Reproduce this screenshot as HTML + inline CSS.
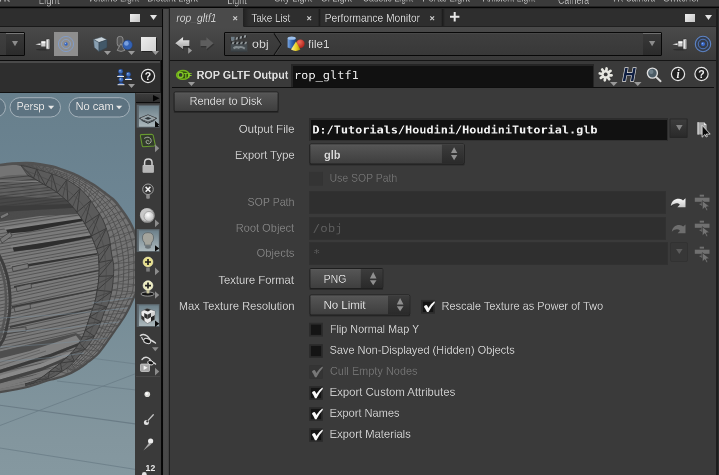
<!DOCTYPE html>
<html><head><meta charset="utf-8"><title>Houdini - rop_gltf1</title>
<style>
html,body{margin:0;padding:0;background:#3a3a3a;}
body{width:719px;height:475px;position:relative;overflow:hidden;font-family:"Liberation Sans",sans-serif;}
.a{position:absolute;}
.t{position:absolute;white-space:pre;line-height:1.6;transform-origin:0 0;will-change:transform;}
svg{position:absolute;overflow:visible;}
.field{position:absolute;box-sizing:border-box;background:#111;border-style:solid;border-color:#2c2c2c #2c2c2c #313131 #2c2c2c;border-width:2px 1px 1px 2px;}
.fieldd{position:absolute;box-sizing:border-box;background:#2f2f2f;border:1px solid #313131;}
</style></head><body>
<!-- ===== top shelf strip ===== -->
<div class="a" id="shelf" style="left:0;top:0;width:719px;height:7px;background:linear-gradient(#3a3a3a 0,#3a3a3a 6px,#232323 6px);overflow:hidden;">
<span class="t" style="left:-19px;top:-12px;color:#b4b4b4;font-family:'Liberation Sans',sans-serif;font-size:24px;transform:translate(0.4px,0.8px) scale(0.5513,0.4706);">Light</span>
<span class="t" style="left:38px;top:-9px;color:#b4b4b4;font-family:'Liberation Sans',sans-serif;font-size:24px;transform:translate(0.7px,0.4px) scale(0.4009,0.4706);">Light</span>
<span class="t" style="left:87px;top:-12px;color:#b4b4b4;font-family:'Liberation Sans',sans-serif;font-size:24px;transform:translate(0.74px,0.8px) scale(0.3715,0.4706);">Volume Light</span>
<span class="t" style="left:147px;top:-12px;color:#b4b4b4;font-family:'Liberation Sans',sans-serif;font-size:24px;transform:translate(0.24px,0.8px) scale(0.3811,0.4706);">Distant Light</span>
<span class="t" style="left:227px;top:-9px;color:#b4b4b4;font-family:'Liberation Sans',sans-serif;font-size:24px;transform:translate(0.26px,0.4px) scale(0.3709,0.4706);">Light</span>
<span class="t" style="left:274px;top:-12px;color:#b4b4b4;font-family:'Liberation Sans',sans-serif;font-size:24px;transform:translate(0.2px,0.8px) scale(0.3858,0.4706);">Sky Light</span>
<span class="t" style="left:320px;top:-12px;color:#b4b4b4;font-family:'Liberation Sans',sans-serif;font-size:24px;transform:translate(0.53px,0.8px) scale(0.3751,0.4706);">GI Light</span>
<span class="t" style="left:362px;top:-12px;color:#b4b4b4;font-family:'Liberation Sans',sans-serif;font-size:24px;transform:translate(0.54px,0.8px) scale(0.3657,0.4706);">Caustic Light</span>
<span class="t" style="left:422px;top:-12px;color:#b4b4b4;font-family:'Liberation Sans',sans-serif;font-size:24px;transform:translate(0.21px,0.8px) scale(0.3943,0.4706);">Portal Light</span>
<span class="t" style="left:482px;top:-12px;color:#b4b4b4;font-family:'Liberation Sans',sans-serif;font-size:24px;transform:translate(0.92px,0.8px) scale(0.3568,0.4706);">Ambient Light</span>
<span class="t" style="left:558px;top:-9px;color:#b4b4b4;font-family:'Liberation Sans',sans-serif;font-size:24px;transform:translate(0.04px,0.2px) scale(0.3629,0.4706);">Camera</span>
<span class="t" style="left:611px;top:-12px;color:#b4b4b4;font-family:'Liberation Sans',sans-serif;font-size:24px;transform:translate(0.76px,0.8px) scale(0.3451,0.4706);">VR Camera</span>
<span class="t" style="left:663px;top:-12px;color:#b4b4b4;font-family:'Liberation Sans',sans-serif;font-size:24px;transform:translate(0.19px,0.8px) scale(0.3944,0.4706);">Switcher</span>
</div>
<div class="a" style="left:0;top:7px;width:719px;height:1px;background:#050505;"></div>
<div class="a" style="left:0;top:8px;width:719px;height:1px;background:#262626;"></div>

<!-- ===== left pane ===== -->
<div class="a" id="leftpane" style="left:0;top:9px;width:163px;height:466px;background:#2e2e2e;overflow:hidden;">
  <div class="a" style="left:0;top:17px;width:162px;height:1px;background:#1a1a1a;"></div>
  <!-- toolbar 27-60 -->
  <div class="a" style="left:0;top:18px;width:162px;height:33px;background:linear-gradient(#494949,#3a3a3a);"></div>
  <div class="a" style="left:0;top:51px;width:160px;height:1px;background:#0c0c0c;"></div>
  <div class="a" style="left:0;top:52px;width:160px;height:2px;background:#4a4a4a;"></div>
  <div class="a" style="left:0;top:83px;width:160px;height:1px;background:#111;"></div>
  <div class="a" style="left:160px;top:51px;width:3px;height:415px;background:linear-gradient(90deg,#2a2a2a,#080808 45%,#050505);"></div>
  <div class="a" style="left:161.5px;top:0;width:1.5px;height:51px;background:#080808;"></div>
</div>
<!-- pane header controls -->
<div class="a" style="left:130px;top:14px;width:10px;height:8px;background:linear-gradient(135deg,#f0f0f0,#c4c4c4);"></div>
<svg style="left:149.5px;top:15px" width="7" height="5" viewBox="0 0 7 5"><path d="M0 0H7L3.5 5Z" fill="#e4e4e4"/></svg>

<!-- toolbar: dropdown stub -->
<div class="a" style="left:-3px;top:32px;width:28px;height:24px;box-sizing:border-box;border:1px solid #080808;border-radius:1px;background:linear-gradient(#3f3f3f,#383838);overflow:hidden;">
  <div class="a" style="left:0;top:0;width:26px;height:1px;background:#484848;"></div>
  <div class="a" style="left:8px;top:0;width:18px;height:22px;background:linear-gradient(#393939,#2b2b2b);"></div>
  <div class="a" style="left:8px;top:0;width:18px;height:1px;background:#787878;"></div>
</div>
<svg style="left:12.4px;top:41.1px" width="6" height="5.2" viewBox="0 0 6 5.2"><path d="M0 0H6L3 5.2Z" fill="#8c8c8c"/></svg>

<!-- pin icon -->
<svg id="pinL" style="left:33px;top:36px" width="19" height="16" viewBox="0 0 19 16">
  <ellipse cx="10" cy="13.6" rx="7" ry="1" fill="#1c1c1c" opacity=".5"/>
  <path d="M2.3 8.3L8 7.3V9.3Z" fill="#f0f0f0"/>
  <rect x="7.9" y="4.9" width="5.2" height="6" fill="#cfcfcf" stroke="#303030" stroke-width=".6"/>
  <rect x="8.5" y="5.5" width="4.2" height="1.7" fill="#fafafa"/>
  <rect x="13" y="3" width="3.7" height="10.2" rx=".8" fill="#e6e6e6" stroke="#303030" stroke-width=".6"/>
  <rect x="15" y="3.5" width="1.2" height="9.2" fill="#b0b0b0"/>
</svg>

<!-- selected "link" button -->
<div class="a" style="left:54px;top:32px;width:24px;height:24px;background:#8e8e8e;"></div>
<svg style="left:54px;top:32px" width="24" height="24" viewBox="0 0 24 24">
  <circle cx="12" cy="12" r="7.6" fill="none" stroke="#7d9fd6" stroke-width=".9" opacity=".85"/>
  <circle cx="12" cy="12" r="4.6" fill="none" stroke="#86a6da" stroke-width=".8" opacity=".8"/>
  <circle cx="12" cy="12" r="1.7" fill="#2f62c4"/>
  <circle cx="11.5" cy="11.5" r=".7" fill="#8fb2ee"/>
</svg>

<!-- cube icon -->
<svg style="left:92px;top:36px" width="20" height="20" viewBox="0 0 20 20">
  <path d="M1.5 3.5L9.5 1L15 3.8L7 6.6Z" fill="#c9d3da" stroke="#42525e" stroke-width=".5"/>
  <path d="M1.5 3.5L7 6.6V15.5L2.3 11.6Z" fill="#8aa0b2" stroke="#42525e" stroke-width=".5"/>
  <path d="M7 6.6L15 3.8V11.6L7 15.5Z" fill="#425868" stroke="#34434e" stroke-width=".5"/>
  <path d="M12 15H19L15.5 19Z" fill="#9a9a9a"/>
</svg>

<!-- shading icon -->
<svg style="left:115px;top:35px" width="22" height="21" viewBox="0 0 22 21">
  <rect x="2.2" y="1.4" width="5.8" height="10" rx="2.6" fill="#565656" stroke="#8c8c8c" stroke-width="1"/>
  <path d="M6 8.5L2.2 15.4Q6 17.4 9.8 15.4Z" fill="#505050" stroke="#8c8c8c" stroke-width="1"/>
  <circle cx="12.6" cy="9.9" r="4.8" fill="#3462b4"/>
  <circle cx="11.4" cy="8.4" r="2.3" fill="#8fb4ee" opacity=".75"/>
  <circle cx="12.6" cy="9.9" r="4.8" fill="none" stroke="#1f3f7c" stroke-width=".5"/>
  <path d="M13 16H20L16.5 20Z" fill="#9a9a9a"/>
</svg>

<!-- white square -->
<div class="a" style="left:140.5px;top:36.5px;width:15px;height:14.5px;background:linear-gradient(135deg,#ededed,#d2d2d2);box-shadow:1px 1px 0 #222;"></div>
<svg style="left:152px;top:51px" width="7" height="4" viewBox="0 0 7 4"><path d="M0 0H7L3.5 4Z" fill="#9a9a9a"/></svg>

<!-- people icon -->
<svg style="left:116px;top:68px" width="22" height="22" viewBox="0 0 22 22">
  <g fill="#3d6cc0" stroke="#1c3a78" stroke-width=".4">
  <circle cx="4.6" cy="3.4" r="2.3"/><path d="M1.2 8.2Q4.6 4.2 8 8.2Z"/>
  <circle cx="12.4" cy="6.4" r="2.3"/><path d="M9 11.2Q12.4 7.2 15.8 11.2Z"/>
  <circle cx="5" cy="11.6" r="2.3"/><path d="M1.6 16.4Q5 12.4 8.4 16.4Z"/>
  </g>
  <g fill="#e8e8e8"><rect x="1.2" y="8" width="6.8" height="1"/><rect x="9" y="11" width="6.8" height="1"/><rect x="1.6" y="16.2" width="6.8" height="1"/></g>
  <circle cx="4" cy="2.8" r=".8" fill="#9dbcf0"/><circle cx="11.8" cy="5.8" r=".8" fill="#9dbcf0"/><circle cx="4.4" cy="11" r=".8" fill="#9dbcf0"/>
  <path d="M12 16H19L15.5 20Z" fill="#9a9a9a"/>
</svg>

<!-- help icon -->
<svg style="left:140px;top:68px;will-change:transform" width="16" height="16" viewBox="0 0 16 16">
  <circle cx="8" cy="8" r="6.6" fill="#202020" stroke="#e6e6e6" stroke-width="1.2"/>
  <text x="8" y="11.9" font-family="Liberation Sans, sans-serif" font-weight="bold" font-size="10.5" fill="#f2f2f2" text-anchor="middle">?</text>
</svg>
<!-- ===== 3D viewport ===== -->
<svg id="viewport" style="left:0;top:92px" width="136" height="383" viewBox="0 92 136 383">
  <defs>
    <linearGradient id="sky" x1="0" y1="0" x2="0" y2="1">
      <stop offset="0" stop-color="#677f8c"/><stop offset=".338" stop-color="#6e8694"/><stop offset=".427" stop-color="#728996"/><stop offset=".602" stop-color="#788e98"/><stop offset=".908" stop-color="#83969e"/><stop offset="1" stop-color="#8598a0"/>
    </linearGradient>
    <clipPath id="vpclip"><rect x="0" y="93" width="135" height="382"/></clipPath>
    <clipPath id="silclip"><path d="M-2 165.3C0.3 165 7.1 164 12 163.6C16.9 163.2 22.7 162.9 27.4 163C32.1 163.1 35.8 163.6 40 164.2C44.2 164.8 48.8 165.6 52.6 166.6C56.4 167.6 59.5 168.8 63 170C66.5 171.2 70.2 172.4 73.7 174C77.2 175.6 80.5 177.4 84 179.3C87.5 181.2 91.4 183.3 94.7 185.5C98 187.7 100.8 190 104 192.4C107.2 194.8 111 197.5 113.7 200C116.4 202.5 118 204.9 120 207.6C122 210.3 124.2 213.2 126 216C127.8 218.8 129.6 221.7 131 224.5C132.4 227.3 133.5 229.9 134.7 233C135.9 236.1 137.4 241.3 138 243L138 290L138 290C137.3 291.2 135.3 294.3 134 297C132.7 299.7 131.5 302.9 130 306C128.5 309.1 127 312.2 125 315.5C123 318.8 120.3 322.6 118 326C115.7 329.4 113.3 332.7 111 336C108.7 339.3 106.3 342.9 104 346C101.7 349.1 99.7 352.1 97 354.8C94.3 357.5 91 359.7 88 362C85 364.3 82.5 366.4 78.7 368.7C74.9 371 69 374 65 375.6C61 377.2 58.2 377.7 55 378.6C51.8 379.5 49.5 379.9 46 381C42.5 382.1 37.8 383.8 34 385C30.2 386.2 27 387.1 23 388C19 388.9 14.2 389.8 10 390.5C5.8 391.2 0 392.2 -2 392.5Z"/></clipPath>
    <clipPath id="inclip"><path d="M-2 177.5L-2 177.5C0 177.1 5.1 175.6 10 175.2C14.9 174.8 23.1 174.3 27.4 175C31.7 175.7 33.2 178 36 179.6C38.8 181.2 41.3 182.9 44 184.5C46.7 186.1 49.5 187.4 52 189C54.5 190.6 56.7 192.2 59 194C61.3 195.8 63.5 197.7 65.6 199.6C67.7 201.5 69.5 203.2 71.6 205.5C73.7 207.8 75.9 210.8 78 213.6C80.1 216.4 82.2 219.6 84 222.4C85.8 225.2 87.2 227.8 88.6 230.6C90 233.4 91 235.1 92.6 239C94.2 242.9 97 250 98 254C99 258 98.6 260.2 98.8 263C99 265.8 99.1 267.8 99 271C98.9 274.2 98.8 278.5 98.4 282C98 285.5 97.4 288.5 96.8 292C96.2 295.5 95.6 299.5 94.6 303C93.6 306.5 92.4 308.8 91 313C89.6 317.2 87.5 323.8 86 328C84.5 332.2 83.6 334.8 82 338C80.4 341.2 78.1 344.6 76.4 347C74.7 349.4 73.6 350.8 72 352.5C70.4 354.2 69 355.2 67 357C65 358.8 62.3 361.6 60 363.5C57.7 365.4 55.5 366.8 53 368.7C50.5 370.6 47.7 373.1 45 375C42.3 376.9 40.3 378.5 37 380C33.7 381.5 27 383.3 25 384L-2 389Z"/></clipPath>
  </defs>
  <g clip-path="url(#vpclip)">
  <rect x="0" y="93" width="135" height="382" fill="url(#sky)"/>
  <g stroke="#7c95a8" stroke-width=".6" opacity=".8">
    <path d="M108 236.5H136M110 239.5H136M112 242.5H136M113 245.5H136M114 248.5H136M114 251.5H136M115 255H136"/>
  </g>
  <g stroke="#6a7c86" fill="none">
    <path d="M0 405.3L136 424" stroke-width="1.1"/>
    <path d="M0 448L136 469.5" stroke-width=".8"/>
    <path d="M57 381L136 390" stroke-width=".8"/>
    <path d="M94 358.5L136 364" stroke-width=".7"/>
    <path d="M0 425.5L136 373.5" stroke-width=".8"/>
  </g>
  <!-- model -->
  <path d="M-2 165.3C0.3 165 7.1 164 12 163.6C16.9 163.2 22.7 162.9 27.4 163C32.1 163.1 35.8 163.6 40 164.2C44.2 164.8 48.8 165.6 52.6 166.6C56.4 167.6 59.5 168.8 63 170C66.5 171.2 70.2 172.4 73.7 174C77.2 175.6 80.5 177.4 84 179.3C87.5 181.2 91.4 183.3 94.7 185.5C98 187.7 100.8 190 104 192.4C107.2 194.8 111 197.5 113.7 200C116.4 202.5 118 204.9 120 207.6C122 210.3 124.2 213.2 126 216C127.8 218.8 129.6 221.7 131 224.5C132.4 227.3 133.5 229.9 134.7 233C135.9 236.1 137.4 241.3 138 243L138 290L138 290C137.3 291.2 135.3 294.3 134 297C132.7 299.7 131.5 302.9 130 306C128.5 309.1 127 312.2 125 315.5C123 318.8 120.3 322.6 118 326C115.7 329.4 113.3 332.7 111 336C108.7 339.3 106.3 342.9 104 346C101.7 349.1 99.7 352.1 97 354.8C94.3 357.5 91 359.7 88 362C85 364.3 82.5 366.4 78.7 368.7C74.9 371 69 374 65 375.6C61 377.2 58.2 377.7 55 378.6C51.8 379.5 49.5 379.9 46 381C42.5 382.1 37.8 383.8 34 385C30.2 386.2 27 387.1 23 388C19 388.9 14.2 389.8 10 390.5C5.8 391.2 0 392.2 -2 392.5Z" fill="#747474"/>
  <g clip-path="url(#silclip)">
    <path d="M12 163.6L24.2 166.1L19.8 163.2L30.7 167.5L27.6 163L37 169.3L35.4 163.6L43.3 171.2L43.1 164.7L49.7 173.1L50.7 166.2L55.9 175.2L58.2 168.3L62.1 177.6L65.6 170.9L67.9 180.6L72.9 173.6L73.6 184L79.9 177.1L78.9 187.8L86.7 180.8L83.8 192.3L93.5 184.7L88.1 197.2L99.9 189.2L92 202.5L106.1 193.9L95.7 208L112.2 198.7L99.3 213.5L117.6 204.4L102.6 219.2L122.3 210.6L105.2 225.3L126.7 217L107.3 231.5L130.6 223.8L109.2 237.8L133.9 230.8L110.3 244.3L136.9 238L111.2 250.9L138.3 245.7L112.2 257.4L138.8 253.5L113.5 263.8L139 261.3L113.7 270.4L139 269.1L113.4 277L138.9 276.9L112.8 283.6L138.5 284.6L112 290.1L137.4 292.4L110.5 296.6L133.2 298.8L108.6 302.9L130 305.9L105.9 308.9L126.5 312.9L103.3 314.9L122.4 319.5L101.2 321.1L118 325.9L98.9 327.3L113.6 332.3L95.9 333.2L109.1 338.7L92.6 338.9L104.6 345.1L88.9 344.3L100 351.4L84.8 349.5L94.6 357L80.3 354.3L88.4 361.7L76 359.4L82.2 366.4L71.7 364.3L75.5 370.4L66.6 368.5L68.5 373.9L61 372" stroke="#505050" stroke-width=".8" fill="none" stroke-linejoin="round"/>
    <path d="M13.8 164C15.7 164 21.3 163.8 25.1 163.9C28.8 164.1 32.6 164.4 36.3 164.9C40.1 165.4 43.8 166.1 47.5 166.9C51.1 167.7 54.8 168.7 58.4 169.9C62 171.1 65.5 172.4 69 173.9C72.5 175.4 75.9 177 79.2 178.8C82.5 180.6 85.7 182.5 88.9 184.6C92 186.7 95 189 97.9 191.3C100.8 193.7 103.8 196 106.5 198.6C109.2 201.2 111.9 203.9 114.3 206.8C116.6 209.7 118.7 212.9 120.6 216.1C122.6 219.3 124.6 222.5 126.2 225.9C127.8 229.3 129.2 232.9 130.3 236.4C131.4 240 132.4 243.7 133 247.4C133.5 251.1 133.7 254.9 133.8 258.7C134 262.4 134 266.2 133.9 270C133.9 273.8 133.8 277.6 133.6 281.3C133.3 285.1 133.3 289 132.2 292.6C131.1 296.1 128.7 299.1 127 302.4C125.4 305.8 123.9 309.3 122.1 312.6C120.3 316 118.4 319.2 116.4 322.4C114.5 325.6 112.4 328.8 110.4 331.9C108.3 335.1 106.2 338.2 104 341.3C101.9 344.4 99.8 347.7 97.4 350.5C94.9 353.3 92.1 355.9 89.3 358.4C86.5 360.9 83.6 363.3 80.5 365.5C77.5 367.7 72.5 370.5 70.9 371.5M15.6 164.4C17.4 164.4 22.9 164.5 26.5 164.8C30.1 165.1 33.7 165.6 37.3 166.2C40.9 166.9 44.5 167.6 48 168.5C51.6 169.3 55.1 170.3 58.5 171.5C62 172.7 65.4 174 68.7 175.5C72 177.1 75.3 178.7 78.4 180.6C81.6 182.4 84.7 184.4 87.6 186.5C90.5 188.7 93.3 191.1 96 193.5C98.7 195.9 101.3 198.3 103.8 201C106.3 203.6 108.8 206.3 110.9 209.2C113.1 212.1 115 215.2 116.8 218.4C118.6 221.5 120.3 224.8 121.7 228.1C123.1 231.4 124.3 234.9 125.3 238.4C126.3 241.9 127.1 245.5 127.6 249.1C128.2 252.7 128.5 256.3 128.7 260C128.9 263.6 128.9 267.3 128.8 270.9C128.8 274.6 128.7 278.2 128.4 281.9C128.1 285.5 128 289.3 127 292.7C126 296.2 124 299.3 122.4 302.6C120.9 305.8 119.3 309.2 117.7 312.4C116.1 315.7 114.4 318.9 112.6 322.1C110.9 325.3 109 328.4 107.1 331.5C105.2 334.6 103.3 337.7 101.2 340.7C99.1 343.8 97.1 346.8 94.7 349.6C92.4 352.4 89.7 354.9 87 357.4C84.4 359.9 81.7 362.4 78.8 364.6C76 366.8 71.3 369.7 69.8 370.7M17.4 164.7C19.1 164.9 24.4 165.3 27.9 165.7C31.4 166.2 34.8 166.9 38.3 167.6C41.7 168.3 45.2 169.1 48.6 170C52 170.9 55.4 171.9 58.7 173.1C62 174.3 65.3 175.7 68.5 177.2C71.6 178.8 74.8 180.5 77.7 182.3C80.7 184.2 83.6 186.2 86.3 188.4C89 190.7 91.5 193.1 94 195.6C96.5 198.1 98.8 200.6 101.1 203.3C103.4 206 105.7 208.7 107.6 211.6C109.6 214.5 111.3 217.6 112.9 220.7C114.5 223.8 116 227 117.3 230.3C118.5 233.6 119.5 237 120.3 240.4C121.2 243.8 121.7 247.3 122.3 250.8C122.8 254.2 123.4 257.7 123.7 261.3C123.9 264.8 123.8 268.3 123.7 271.9C123.7 275.4 123.5 278.9 123.2 282.5C122.9 286 122.7 289.6 121.8 292.9C120.9 296.3 119.3 299.4 117.8 302.7C116.4 305.9 114.8 309.1 113.3 312.2C111.8 315.4 110.4 318.6 108.8 321.8C107.2 324.9 105.7 328.1 103.9 331.1C102.2 334.2 100.3 337.2 98.3 340.1C96.4 343.1 94.4 346 92.1 348.7C89.8 351.4 87.3 353.9 84.8 356.3C82.3 358.8 79.8 361.4 77.2 363.7C74.5 365.9 70.1 368.9 68.7 370M19.2 165.1C20.9 165.4 25.9 166 29.3 166.6C32.6 167.3 35.9 168.1 39.2 168.9C42.5 169.7 45.8 170.6 49.1 171.6C52.4 172.5 55.7 173.5 58.8 174.7C62 175.9 65.2 177.3 68.2 178.9C71.2 180.4 74.2 182.2 77 184.1C79.8 186 82.5 188.1 85.1 190.4C87.6 192.6 89.8 195.2 92.1 197.7C94.3 200.3 96.4 202.9 98.4 205.6C100.5 208.3 102.6 211.1 104.3 213.9C106.1 216.8 107.6 219.9 109 223C110.5 226.1 111.8 229.2 112.8 232.5C113.9 235.7 114.6 239 115.3 242.4C116 245.7 116.4 249.1 117 252.4C117.5 255.8 118.3 259.2 118.6 262.6C118.9 265.9 118.8 269.4 118.7 272.8C118.6 276.2 118.4 279.6 118 283C117.7 286.4 117.3 289.9 116.5 293.1C115.7 296.4 114.5 299.6 113.2 302.8C112 305.9 110.3 308.9 108.9 312C107.5 315.2 106.4 318.4 105 321.5C103.6 324.6 102.3 327.7 100.7 330.7C99.1 333.7 97.4 336.7 95.5 339.5C93.6 342.4 91.6 345.2 89.5 347.8C87.3 350.5 84.9 352.9 82.5 355.3C80.2 357.8 78 360.4 75.5 362.7C73 365.1 69 368.1 67.7 369.2" stroke="#4e4e4e" stroke-width=".9" fill="none"/>
    <path d="" stroke="#484848" stroke-width=".7" fill="none"/>
    <path d="M54.1 168.6C55.8 169.2 61 170.8 64.5 172C68 173.2 71.7 174.4 75.2 176C78.7 177.6 82 179.4 85.5 181.3C89 183.2 92.9 185.3 96.2 187.5C99.5 189.7 102.3 192 105.5 194.4C108.7 196.8 112.5 199.5 115.2 202C117.9 204.5 119.5 206.9 121.5 209.6C123.5 212.3 125.7 215.2 127.5 218C129.3 220.8 131.1 223.7 132.5 226.5C133.9 229.3 135 231.9 136.2 235C137.4 238.1 139.4 240 139.5 245C139.6 250 137.6 257.5 137 265C136.4 272.5 136.2 285.8 136 290" stroke="#858585" stroke-width="1" fill="none" opacity=".7"/>
  </g>
  <path d="M-2 177.5L-2 177.5C0 177.1 5.1 175.6 10 175.2C14.9 174.8 23.1 174.3 27.4 175C31.7 175.7 33.2 178 36 179.6C38.8 181.2 41.3 182.9 44 184.5C46.7 186.1 49.5 187.4 52 189C54.5 190.6 56.7 192.2 59 194C61.3 195.8 63.5 197.7 65.6 199.6C67.7 201.5 69.5 203.2 71.6 205.5C73.7 207.8 75.9 210.8 78 213.6C80.1 216.4 82.2 219.6 84 222.4C85.8 225.2 87.2 227.8 88.6 230.6C90 233.4 91 235.1 92.6 239C94.2 242.9 97 250 98 254C99 258 98.6 260.2 98.8 263C99 265.8 99.1 267.8 99 271C98.9 274.2 98.8 278.5 98.4 282C98 285.5 97.4 288.5 96.8 292C96.2 295.5 95.6 299.5 94.6 303C93.6 306.5 92.4 308.8 91 313C89.6 317.2 87.5 323.8 86 328C84.5 332.2 83.6 334.8 82 338C80.4 341.2 78.1 344.6 76.4 347C74.7 349.4 73.6 350.8 72 352.5C70.4 354.2 69 355.2 67 357C65 358.8 62.3 361.6 60 363.5C57.7 365.4 55.5 366.8 53 368.7C50.5 370.6 47.7 373.1 45 375C42.3 376.9 40.3 378.5 37 380C33.7 381.5 27 383.3 25 384L-2 389Z" fill="#7a7a7a"/>
  <g clip-path="url(#inclip)">
    <!-- shaded top underside -->
    <path d="M-2 205L40 203L73.7 203.5L80 214L40 216L-2 222Z" fill="#4c4c4c"/>
    <path d="M-2 196L70 199L73 204L-2 206Z" fill="#5a5a5a"/>
    <path d="M-2 179L112 167.7M-2 183L112 171.3M-2 186.1L112 174M-2 189.2L112 176.8M-2 193.2L112 180.3M-2 196.3L112 183M-2 199.4L112 185.8M-2 203.4L112 189.3M-2 206.5L112 192.1M-2 209.6L112 194.8M-2 213.6L112 198.4M-2 216.7L112 201.1M-2 219.8L112 203.9M-2 223.8L112 207.4M-2 226.9L112 210.2M-2 230L112 212.9M-2 234L112 216.4M-2 237.1L112 219.2M-2 240.2L112 221.9M-2 244.2L112 225.5M-2 247.3L112 228.2M-2 250.4L112 231M-2 254.4L112 234.5M-2 257.5L112 237.3M-2 260.6L112 240M-2 264.6L112 243.6M-2 267.7L112 246.3M-2 270.8L112 249M-2 274.8L112 252.6M-2 277.9L112 255.3M-2 281L112 258.1M-2 285L112 261.6M-2 288.1L112 264.4M-2 291.2L112 267.1M-2 295.2L112 270.7M-2 298.3L112 273.4M-2 301.4L112 276.3M-2 305.4L112 280.3M-2 308.5L112 283.4M-2 311.6L112 286.5M-2 315.6L112 290.5M-2 318.7L112 293.6M-2 321.8L112 296.7M-2 325.8L112 300.7M-2 328.9L112 303.8M-2 332L112 306.9M-2 336L112 310.9M-2 339.1L112 314M-2 342.2L112 317.1M-2 346.2L112 321.1M-2 349.3L112 324.2M-2 352.4L112 327.3M-2 356.4L112 331.3M-2 359.5L112 334.4M-2 362.6L112 337.5M-2 366.6L112 341.5M-2 369.7L112 344.6M-2 372.8L112 347.7M-2 376.8L112 351.7M-2 379.9L112 354.8M-2 383L112 357.9M-2 387L112 361.9M-2 390.1L112 365M-2 393.2L112 368.1M-2 397.2L112 372.1M-2 400.3L112 375.2M-2 403.4L112 378.3M-2 407.4L112 382.3M-2 410.5L112 385.4M-2 413.6L112 388.5M-2 417.6L112 392.5" stroke="#4c4c4c" stroke-width=".8" fill="none"/>
    <path d="M-2 168H90V207L-2 212Z" fill="#000" opacity=".2"/>
    <!-- light plank faces -->
    <path d="M4 228L85 215.5L86 218L6 230Z" fill="#848484"/>
    <path d="M10 246L93 233L93.7 235L12 248Z" fill="#848484"/>
    <path d="M10 265L97 251L97.5 253L12 267Z" fill="#7e7e7e"/>
    <!-- dark gaps -->
    <path d="M6 229.7L86 218L86 220.2L30 231.5L8 233.5Z" fill="#2c2c2c"/>
    <path d="M12.6 247.6L93.7 235L94 237L40 248.5L14 251.5Z" fill="#2e2e2e"/>
    <path d="M12 266.5L97.5 253L97.5 254.6L14 269Z" fill="#333"/>
    <path d="M14 286L99 270L99 271.2L14 288Z" fill="#3a3a3a"/>
    <path d="M12 306L98 289L98 290.2L12 308Z" fill="#3c3c3c"/>
    <path d="M10 326L94 308L94 309.2L10 328Z" fill="#3c3c3c"/>
    <path d="M-2 186L55 189.5M-2 192L64 196" stroke="#505050" stroke-width=".8" fill="none"/>
    <path d="M-2 181L40 181.5" stroke="#8a8a8a" stroke-width=".8" fill="none"/>
    <!-- detail boxes on left -->
    <g fill="#787878" stroke="#3a3a3a" stroke-width=".7">
      <path d="M12 267L28 263.5L28.5 268L13 271.5Z"/><path d="M16 287L31 283.5L31.5 288L17 291.5Z"/><path d="M14 307.5L30 304L30.5 308.5L15 312Z"/><path d="M0 330L26 327L26 331L0 334.5Z"/>
      <path d="M0 239L10 232L12 236L2 243Z"/><path d="M0 216L8 212L9 215L1 219Z"/>
    </g>
    <!-- far ring -->
    <path d="M-2 253C-1 255.2 2.3 261.2 4 266C5.7 270.8 7.4 276.4 8.4 281.6C9.4 286.8 9.8 291.8 10 297C10.2 302.2 10 308.2 9.5 313C9 317.8 7.9 321.8 7 326C6.1 330.2 5.5 334.3 4 338C2.5 341.7 -1 346.3 -2 348" stroke="#3e3e3e" stroke-width="3" fill="none"/>
    <path d="M-6 253C-5 255.2 -1.7 261.2 0 266C1.7 270.8 3.4 276.4 4.4 281.6C5.4 286.8 5.8 291.8 6 297C6.2 302.2 6 308.2 5.5 313C5 317.8 3.9 321.8 3 326C2.1 330.2 1.5 334.3 0 338C-1.5 341.7 -5 346.3 -6 348" stroke="#555" stroke-width="2.5" fill="none"/>
    <!-- lower planks -->
    <path d="M-2 352L30 344L76 333L84 338L60 350L30 360L-2 368Z" fill="#4e4e4e"/>
    <path d="M-2 359L30 351L76 335.5L81 342L50 354L-2 370.5Z" fill="#808080"/>
    <path d="M-2 370.5L50 354L81 342L79 345.5L50 357.5L-2 374Z" fill="#3a3a3a"/>
    <path d="M-2 376L40 364L70 352L72 354.5L42 367.5L-2 380Z" fill="#8a8a8a"/>
    <path d="M-2 380L42 367.5L66 357.5L64 361L40 371.5L-2 384Z" fill="#444"/>
    <path d="M-2 385L30 377L55 367L54 370L30 380L-2 388.5Z" fill="#7a7a7a"/>
    <path d="M-2 363L40 350M-2 366.5L46 351" stroke="#5e5e5e" stroke-width=".8" fill="none"/>
  </g>
  <!-- truss ring -->
  <path d="M21 165.5C22.7 165.8 27.5 166.7 31 167.6C34.5 168.5 38.3 169.7 42 170.8C45.7 171.9 49.5 173 53 174.2C56.5 175.4 59.8 176.5 63 178C66.2 179.5 69.2 181.2 72 183C74.8 184.8 77.5 186.6 80 188.7C82.5 190.8 84.9 193.4 87 195.8C89.1 198.2 90.8 200.8 92.6 203.4C94.4 206 96.3 208.7 98 211.5C99.7 214.3 101.6 217 103 220C104.4 223 105.5 226.2 106.6 229.4C107.7 232.6 108.7 234.9 109.5 239C110.3 243.1 110.9 249.8 111.6 254C112.3 258.2 113.2 261.2 113.5 264C113.8 266.8 113.8 268 113.7 271C113.6 274 113.3 278.5 113 282C112.7 285.5 112.3 288.5 111.6 292C110.9 295.5 109.9 299.5 108.6 303C107.3 306.5 105.6 309 104 313C102.4 317 100.9 322.7 99 327C97.1 331.3 94.8 335.5 92.6 339C90.4 342.5 87.9 345.6 86 348C84.1 350.4 82.8 351.4 81 353.5C79.2 355.6 76.9 358.4 75 360.5C73.1 362.6 71.7 364.5 69.4 366.4C67.1 368.3 63.7 370.3 61 372C58.3 373.7 56.5 375.2 53 376.8C49.5 378.4 44.7 380 40 381.5C35.3 383 27.5 385.2 25 386L25 384C27 383.3 33.7 381.5 37 380C40.3 378.5 42.3 376.9 45 375C47.7 373.1 50.5 370.6 53 368.7C55.5 366.8 57.7 365.4 60 363.5C62.3 361.6 65 358.8 67 357C69 355.2 70.4 354.2 72 352.5C73.6 350.8 74.7 349.4 76.4 347C78.1 344.6 80.4 341.2 82 338C83.6 334.8 84.5 332.2 86 328C87.5 323.8 89.6 317.2 91 313C92.4 308.8 93.6 306.5 94.6 303C95.6 299.5 96.2 295.5 96.8 292C97.4 288.5 98 285.5 98.4 282C98.8 278.5 98.9 274.2 99 271C99.1 267.8 99 265.8 98.8 263C98.6 260.2 99 258 98 254C97 250 94.2 242.9 92.6 239C91 235.1 90 233.4 88.6 230.6C87.2 227.8 85.8 225.2 84 222.4C82.2 219.6 80.1 216.4 78 213.6C75.9 210.8 73.7 207.8 71.6 205.5C69.5 203.2 67.7 201.5 65.6 199.6C63.5 197.7 61.3 195.8 59 194C56.7 192.2 54.5 190.6 52 189C49.5 187.4 46.7 186.1 44 184.5C41.3 182.9 38.8 181.2 36 179.6C33.2 178 28.8 175.8 27.4 175Z" fill="#5b5b5b"/>
  <path d="M21 165.5L21 165.5L33.6 178.2L36.6 169.2L45.5 185.4L51.9 173.8L57.3 192.7L66.7 179.9L67.9 201.7L80 188.7L77 212.2L90.7 200.7L84.8 223.7L99.6 214L91.3 236L106.3 228.5L96.4 248.9L110.3 244L98.8 262.5L112.7 259.8L98.8 276.4L113.5 275.7L97.1 290.2L111.7 291.6L94.4 303.9L106.9 306.9L89.7 317L101 321.7L85.2 330.1L94.3 336.2L79.3 342.7L85 349.3L70.8 353.7L74.3 361.2L60.5 363L62 371.3L49.5 371.5L47.9 378.8L38.1 379.5L32.7 383.7L25 384" stroke="#3c3c3c" stroke-width="1" fill="none" stroke-linejoin="round"/>
  <path d="M21 165.5L27.4 175M36.6 169.2L39.6 181.8M51.9 173.8L51.6 188.7M66.7 179.9L62.7 197.1M80 188.7L72.7 206.7M90.7 200.7L81 217.9M99.6 214L88.2 229.8M106.3 228.5L94 242.4M110.3 244L98.4 255.6M112.7 259.8L99 269.5M113.5 275.7L98.2 283.4M111.7 291.6L95.9 297.1M106.9 306.9L92 310.4M101 321.7L87.5 323.6M94.3 336.2L82.7 336.6M85 349.3L75.4 348.4M74.3 361.2L65.6 358.3M62 371.3L55 367.2M47.9 378.8L44 375.7M32.7 383.7L31.6 381.9" stroke="#424242" stroke-width=".8" fill="none"/>
  <path d="M24.2 170.2C25.4 170.7 28.9 171.8 31.2 172.7C33.5 173.5 35.8 174.5 38.1 175.5C40.4 176.4 42.6 177.4 44.9 178.4C47.2 179.4 49.5 180.3 51.7 181.3C54 182.3 56.2 183.4 58.4 184.6C60.5 185.8 62.7 187.1 64.7 188.5C66.8 189.8 68.8 191.3 70.7 192.9C72.7 194.4 74.6 196 76.4 197.7C78.1 199.5 79.8 201.4 81.4 203.3C82.9 205.2 84.4 207.2 85.9 209.3C87.3 211.3 88.7 213.4 90 215.5C91.4 217.6 92.6 219.7 93.9 221.9C95.1 224.1 96.3 226.2 97.4 228.5C98.4 230.8 99.3 233.1 100.1 235.5C101 237.8 101.9 240.1 102.6 242.5C103.3 244.9 103.9 247.3 104.3 249.8C104.7 252.2 104.8 254.7 105 257.2C105.3 259.7 105.7 262.2 105.9 264.6C106.1 267.1 106.3 269.6 106.3 272.1C106.3 274.6 106.1 277.1 105.9 279.5C105.6 282 105.3 284.5 105 287C104.6 289.4 104.3 291.9 103.8 294.4C103.3 296.8 102.8 299.3 102.1 301.6C101.3 304 100.3 306.3 99.4 308.6C98.5 310.9 97.5 313.2 96.6 315.6C95.8 317.9 95.1 320.3 94.3 322.6C93.4 325 92.6 327.4 91.6 329.6C90.7 331.9 89.6 334.2 88.5 336.4C87.3 338.6 86 340.7 84.6 342.8C83.2 344.9 81.7 346.9 80.2 348.8C78.6 350.8 76.9 352.6 75.2 354.4C73.5 356.2 71.7 358 70 359.8C68.2 361.5 66.5 363.4 64.6 365C62.7 366.6 60.6 367.9 58.5 369.3C56.5 370.7 54.5 372.2 52.4 373.6C50.3 374.9 48.2 376.1 46 377.3C43.8 378.4 41.5 379.5 39.2 380.4C36.9 381.4 34.5 382.1 32.2 382.8C29.8 383.6 26.2 384.6 25 385" stroke="#464646" stroke-width=".6" fill="none"/>
  <path d="M21 165.5C22.7 165.8 27.5 166.7 31 167.6C34.5 168.5 38.3 169.7 42 170.8C45.7 171.9 49.5 173 53 174.2C56.5 175.4 59.8 176.5 63 178C66.2 179.5 69.2 181.2 72 183C74.8 184.8 77.5 186.6 80 188.7C82.5 190.8 84.9 193.4 87 195.8C89.1 198.2 90.8 200.8 92.6 203.4C94.4 206 96.3 208.7 98 211.5C99.7 214.3 101.6 217 103 220C104.4 223 105.5 226.2 106.6 229.4C107.7 232.6 108.7 234.9 109.5 239C110.3 243.1 110.9 249.8 111.6 254C112.3 258.2 113.2 261.2 113.5 264C113.8 266.8 113.8 268 113.7 271C113.6 274 113.3 278.5 113 282C112.7 285.5 112.3 288.5 111.6 292C110.9 295.5 109.9 299.5 108.6 303C107.3 306.5 105.6 309 104 313C102.4 317 100.9 322.7 99 327C97.1 331.3 94.8 335.5 92.6 339C90.4 342.5 87.9 345.6 86 348C84.1 350.4 82.8 351.4 81 353.5C79.2 355.6 76.9 358.4 75 360.5C73.1 362.6 71.7 364.5 69.4 366.4C67.1 368.3 63.7 370.3 61 372C58.3 373.7 56.5 375.2 53 376.8C49.5 378.4 44.7 380 40 381.5C35.3 383 27.5 385.2 25 386" stroke="#3a3a3a" stroke-width=".9" fill="none"/>
  <path d="M27.4 175C28.8 175.8 33.2 178 36 179.6C38.8 181.2 41.3 182.9 44 184.5C46.7 186.1 49.5 187.4 52 189C54.5 190.6 56.7 192.2 59 194C61.3 195.8 63.5 197.7 65.6 199.6C67.7 201.5 69.5 203.2 71.6 205.5C73.7 207.8 75.9 210.8 78 213.6C80.1 216.4 82.2 219.6 84 222.4C85.8 225.2 87.2 227.8 88.6 230.6C90 233.4 91 235.1 92.6 239C94.2 242.9 97 250 98 254C99 258 98.6 260.2 98.8 263C99 265.8 99.1 267.8 99 271C98.9 274.2 98.8 278.5 98.4 282C98 285.5 97.4 288.5 96.8 292C96.2 295.5 95.6 299.5 94.6 303C93.6 306.5 92.4 308.8 91 313C89.6 317.2 87.5 323.8 86 328C84.5 332.2 83.6 334.8 82 338C80.4 341.2 78.1 344.6 76.4 347C74.7 349.4 73.6 350.8 72 352.5C70.4 354.2 69 355.2 67 357C65 358.8 62.3 361.6 60 363.5C57.7 365.4 55.5 366.8 53 368.7C50.5 370.6 47.7 373.1 45 375C42.3 376.9 40.3 378.5 37 380C33.7 381.5 27 383.3 25 384" stroke="#383838" stroke-width="1" fill="none"/>
  <!-- ground grid lines seen through wireframe -->
  <g stroke="#7b92a2" stroke-width=".7" fill="none" opacity=".6">
    <path d="M92 303Q115 300 136 297"/><path d="M0 318Q70 315 128 308"/><path d="M0 332Q60 330 120 322"/><path d="M0 347Q50 345 108 338"/><path d="M0 361Q40 360 84 353"/>
  </g>
  <!-- silhouette edges -->
  <path d="M-2 165.3C0.3 165 7.1 164 12 163.6C16.9 163.2 22.7 162.9 27.4 163C32.1 163.1 35.8 163.6 40 164.2C44.2 164.8 48.8 165.6 52.6 166.6C56.4 167.6 59.5 168.8 63 170C66.5 171.2 70.2 172.4 73.7 174C77.2 175.6 80.5 177.4 84 179.3C87.5 181.2 91.4 183.3 94.7 185.5C98 187.7 100.8 190 104 192.4C107.2 194.8 111 197.5 113.7 200C116.4 202.5 118 204.9 120 207.6C122 210.3 124.2 213.2 126 216C127.8 218.8 129.6 221.7 131 224.5C132.4 227.3 133.5 229.9 134.7 233C135.9 236.1 137.4 241.3 138 243" stroke="#515151" stroke-width="2.6" fill="none"/>
  <path d="M138 290C137.3 291.2 135.3 294.3 134 297C132.7 299.7 131.5 302.9 130 306C128.5 309.1 127 312.2 125 315.5C123 318.8 120.3 322.6 118 326C115.7 329.4 113.3 332.7 111 336C108.7 339.3 106.3 342.9 104 346C101.7 349.1 99.7 352.1 97 354.8C94.3 357.5 91 359.7 88 362C85 364.3 82.5 366.4 78.7 368.7C74.9 371 69 374 65 375.6C61 377.2 58.2 377.7 55 378.6C51.8 379.5 49.5 379.9 46 381C42.5 382.1 37.8 383.8 34 385C30.2 386.2 27 387.1 23 388C19 388.9 14.2 389.8 10 390.5C5.8 391.2 0 392.2 -2 392.5" stroke="#4c4c4c" stroke-width="2.2" fill="none"/>
  <!-- view pills -->
  <g fill="#5d7381" stroke="#a4b1ba" stroke-width="1">
    <rect x="-14" y="97.7" width="19.5" height="19.3" rx="9.65"/>
    <rect x="10" y="97.7" width="50.5" height="19.3" rx="9.65"/>
    <rect x="69" y="97.7" width="60.5" height="19.3" rx="9.65"/>
  </g>
  <path d="M48 105.8H54.2L51.1 109.2Z" fill="#e8e8e8"/>
  <path d="M116 105.8H122.2L119.1 109.2Z" fill="#e8e8e8"/>
  </g>
</svg>
<!-- ===== viewport right toolbar ===== -->
<div class="a" style="left:135px;top:93px;width:26px;height:382px;background:#3a3a3a;"></div>
<div class="a" style="left:136px;top:93px;width:24px;height:10px;box-sizing:border-box;border-bottom:1px solid #0c0c0c;border-top:1px solid #4a4a4a;background:linear-gradient(#3c3c3c,#2f2f2f);"></div>
<svg style="left:153px;top:94.6px" width="6.5" height="6.4" viewBox="0 0 6.5 6.4"><path d="M0 0L6.5 3.2L0 6.4Z" fill="#050505"/></svg>
<div class="a" style="left:136px;top:376px;width:24px;height:1px;background:#484848;"></div>
<svg id="vptools" style="left:135px;top:92px;will-change:transform" width="25" height="383" viewBox="135 92 25 383">
  <defs>
    <linearGradient id="selb" x1="0" y1="0" x2="0" y2="1"><stop offset="0" stop-color="#6c808a"/><stop offset="1" stop-color="#abb7bb"/></linearGradient>
    <radialGradient id="sph" cx=".4" cy=".35" r=".7"><stop offset="0" stop-color="#fff"/><stop offset="1" stop-color="#b8b8b8"/></radialGradient>
  </defs>
  <!-- layers (selected) -->
  <rect x="136.7" y="104.7" width="22.8" height="22.9" fill="#5a646a"/><rect x="138.9" y="106" width="19.9" height="20.7" fill="url(#selb)"/>
  <g fill="none" stroke-linejoin="round">
    <path d="M139.8 118.4L148 115L156.2 118.4L148 121.8Z" stroke="#2c3236" stroke-width="1.2"/>
    <path d="M140.8 118.4L148 115.5L155.2 118.4L148 121.3Z" stroke="#eef0f0" stroke-width=".5"/>
    <path d="M141.5 120.3L148 123.2L154.5 120.3" stroke="#2c3236" stroke-width="1"/>
  </g>
  <path d="M144.6 118.4L148 117L151.4 118.4L148 119.8Z" fill="#30363a"/>
  <path d="M155 121V127H159.2Z" fill="#0a0a0a" transform="translate(0 0)"/>
  <path d="M155 121L159.3 124.5L155 127.2Z" fill="#0a0a0a"/>
  <!-- green display icon -->
  <path d="M141 134.6L151.6 134.2Q152.8 134.2 153.2 135.4L155.2 144.6Q155.4 145.8 154.2 146L143.6 146.8Q142.4 146.8 142.2 145.6L140.4 136Q140.2 134.8 141 134.6Z" fill="#323a2c" stroke="#689a30" stroke-width="1.1"/>
  <path d="M144.5 138.2Q148.5 135.6 150.8 139Q152.2 142.6 148.6 143.8Q145.6 143.8 146 141.2Q147.6 139.4 149 141" fill="none" stroke="#a4a8a0" stroke-width="1" stroke-linecap="round"/>
  <path d="M155 144.2L159.2 148.2L155 152.2Z" fill="#8c8c8c"/>
  <!-- lock -->
  <path d="M144.6 165.5V162.4Q144.6 158.9 148.3 158.9Q152 158.9 152 162.4V165.5" fill="none" stroke="#d4d4d4" stroke-width="1.5"/>
  <rect x="142.6" y="164.9" width="11.3" height="7.8" rx=".8" fill="#c2c2c2"/>
  <path d="M142.5 167H154M142.5 169H154M142.5 171H154" stroke="#a4a4a4" stroke-width=".7"/>
  <!-- bulb with x -->
  <circle cx="148" cy="189.3" r="5.3" fill="#383838" stroke="#a0a0a0" stroke-width="1"/>
  <path d="M145.6 186.9L150.4 191.7M150.4 186.9L145.6 191.7" stroke="#f2f2f2" stroke-width="1.5"/>
  <path d="M146.2 194.4H149.8V198.3Q148 199.4 146.2 198.3Z" fill="#8c8c8c"/>
  <!-- sphere -->
  <circle cx="147.3" cy="215.4" r="7.4" fill="#9c9c9c"/>
  <circle cx="146.6" cy="214.6" r="6.4" fill="#c8c8c8"/>
  <circle cx="149" cy="216.4" r="5" fill="url(#sph)" stroke="#8a8a8a" stroke-width=".6"/>
  <path d="M155 219.5L159.2 223.3L155 227.2Z" fill="#8c8c8c"/>
  <!-- bulb (selected) -->
  <rect x="136.7" y="229" width="22.8" height="22.9" fill="#5a646a"/><rect x="138.9" y="230.3" width="19.9" height="20.7" fill="url(#selb)"/>
  <path d="M148 232.6Q153.6 232.6 153.6 238Q153.6 240.6 151.4 243V245.2H144.6V243Q142.4 240.6 142.4 238Q142.4 232.6 148 232.6Z" fill="#a4a49c" stroke="#5c6468" stroke-width=".8"/>
  <path d="M145.2 245.6H150.8V248Q148 249.6 145.2 248Z" fill="#6c7478"/>
  <path d="M155 245.2L159.3 248.4L155 251.6Z" fill="#0a0a0a"/>
  <!-- yellow bulb + -->
  <circle cx="148" cy="262" r="4.9" fill="#e6df8c" stroke="#f4f0b8" stroke-width=".6"/>
  <path d="M145 262H151M148 259V265" stroke="#222" stroke-width="1.7"/>
  <path d="M146.2 267.6H149.8V271.6H146.2Z" fill="#7c7c7c"/>
  <path d="M155 267.6L159.2 271.4L155 275.2Z" fill="#8c8c8c"/>
  <!-- yellow bulb + on disc -->
  <ellipse cx="147.6" cy="294" rx="6.6" ry="2.1" fill="#161616" stroke="#c8c8c8" stroke-width=".7"/>
  <circle cx="148" cy="285.6" r="4.9" fill="#ecebc0" stroke="#fafae0" stroke-width=".6"/>
  <path d="M146.6 290.2H149.4V293.4H146.6Z" fill="#c8c49c"/>
  <path d="M145 285.6H151M148 282.6V288.6" stroke="#222" stroke-width="1.7"/>
  <path d="M155 291.2L159.2 295L155 298.8Z" fill="#8c8c8c"/>
  <!-- checker (selected) -->
  <rect x="136.7" y="304" width="22.8" height="22.9" fill="#5a646a"/><rect x="138.9" y="305.3" width="19.9" height="20.7" fill="url(#selb)"/>
  <path d="M141 311.5L147 308.5L155 311L154.5 319.5L147.5 323.5L141.5 319Z" fill="#ececec" stroke="#555" stroke-width=".5"/>
  <path d="M144 310L147 308.5L151 309.75L148 311.6Z" fill="#2a2a2a"/>
  <path d="M141.2 315.25L144.3 317.2L144.5 321.2L141.5 319Z" fill="#333"/>
  <path d="M144.2 313L147.5 314.8L147.5 319.2L144.3 317.2Z" fill="#2e2e2e"/>
  <path d="M147.5 314.8L151.2 312.8L151 317L147.5 319.2Z" fill="#3a3a3a"/>
  <path d="M151 317L154.6 315L154.5 319.5L151 321.5Z" fill="#222"/>
  <path d="M151.2 312.8L155 311L154.6 315L151 317Z" fill="#d4d4d4"/>
  <path d="M155 320.6L159.3 323.8L155 327Z" fill="#0a0a0a"/>
  <!-- glasses 1 -->
  <path d="M140.4 335.6Q143.5 333 147.5 336.2L150.5 340Q153.5 341.5 155.5 343" fill="none" stroke="#d8d8d8" stroke-width="1.4" stroke-linecap="round"/>
  <ellipse cx="147.2" cy="341" rx="3.6" ry="2.4" fill="#1c1c1c" stroke="#e0e0e0" stroke-width="1" transform="rotate(18 147.2 341)"/>
  <path d="M141.5 337Q142.5 340 144 340.2" fill="none" stroke="#c8c8c8" stroke-width="1.2"/>
  <path d="M152 347.2H158.6L155.3 351.2Z" fill="#8c8c8c"/>
  <!-- glasses 2 with play -->
  <path d="M142 359.5Q145.5 355.6 149.5 358.8L152 362Q154 362.8 155.5 364" fill="none" stroke="#d8d8d8" stroke-width="1.4" stroke-linecap="round"/>
  <ellipse cx="150.6" cy="362.8" rx="3" ry="2.1" fill="#111" stroke="#e0e0e0" stroke-width=".9" transform="rotate(18 150.6 362.8)"/>
  <rect x="140.5" y="364" width="9" height="7.5" rx="1" fill="#a8a8a8" stroke="#d8d8d8" stroke-width=".7"/>
  <path d="M143.6 365.6L147.6 367.8L143.6 370Z" fill="#f4f4f4"/>
  <path d="M155 367.8L159.2 371.6L155 375.4Z" fill="#8c8c8c"/>
  <!-- dot -->
  <circle cx="147.3" cy="394.3" r="2.8" fill="#dcdcd8"/>
  <circle cx="146.7" cy="393.6" r="1.3" fill="#fff"/>
  <!-- stroke tool -->
  <path d="M153.3 414.8L147 421.6" stroke="#c4c4c4" stroke-width="1.3" stroke-linecap="round"/>
  <circle cx="146.4" cy="422.4" r="2.5" fill="#e2e2e2"/><circle cx="147.3" cy="421.4" r="1.1" fill="#3a3a3a"/>
  <!-- pin tool -->
  <path d="M149.2 442.6L143.4 450.4L151.2 444.2Z" fill="#a8a8a8"/>
  <circle cx="150.6" cy="441" r="2.6" fill="#ececec"/>
  <!-- 12 -->
  <circle cx="144.3" cy="474.4" r="2.4" fill="#e4e4e4"/>
  <text x="145.6" y="471.4" font-family="Liberation Sans, sans-serif" font-weight="bold" font-size="9.5" fill="#ececec" textLength="9.6" lengthAdjust="spacingAndGlyphs">12</text>
</svg>


<!-- separator -->
<div class="a" style="left:163px;top:9px;width:6px;height:466px;background:linear-gradient(90deg,#454545,#4a4a4a 30%,#484848 80%,#3a3a3a);"></div>
<div class="a" style="left:169px;top:9px;width:1px;height:466px;background:#1e1e1e;"></div>

<!-- ===== right pane ===== -->
<div class="a" id="rightpane" style="left:170px;top:9px;width:546px;height:466px;background:#3a3a3a;"></div>
<div class="a" style="left:170px;top:27px;width:546px;height:33px;background:linear-gradient(#4a4a4a,#3a3a3a);"></div>
<div class="a" style="left:716px;top:9px;width:2px;height:466px;background:#1d1d1d;"></div>
<div class="a" style="left:718px;top:9px;width:1px;height:466px;background:#2b2b2b;"></div>
<!-- ===== right pane: tab strip ===== -->
<div class="a" style="left:170px;top:9px;width:546px;height:18px;background:#2e2e2e;"></div>
<div class="a" style="left:244px;top:26px;width:472px;height:1px;background:#202020;"></div>
<div class="a" style="left:170px;top:8px;width:73.3px;height:19px;background:#4a4a4a;"></div>
<div class="a" style="left:243.3px;top:9px;width:6px;height:17px;background:linear-gradient(90deg,#202020,#2e2e2e);"></div>
<div class="a" style="left:317.5px;top:9px;width:3px;height:17px;background:linear-gradient(90deg,#2e2e2e,#1c1c1c 45%,#2e2e2e);"></div>
<div class="a" style="left:440.5px;top:9px;width:4px;height:17px;background:linear-gradient(90deg,#2e2e2e,#1c1c1c 40%,#2e2e2e);"></div>
<svg style="left:232.9px;top:15.6px" width="4.4" height="4.4" viewBox="0 0 4.4 4.4"><path d="M.3 .3L4.1 4.1M4.1 .3L.3 4.1" stroke="#cfcfcf" stroke-width="1.15"/></svg>
<svg style="left:307.1px;top:15.6px" width="4.4" height="4.4" viewBox="0 0 4.4 4.4"><path d="M.3 .3L4.1 4.1M4.1 .3L.3 4.1" stroke="#cfcfcf" stroke-width="1.15"/></svg>
<svg style="left:430.1px;top:15.6px" width="4.4" height="4.4" viewBox="0 0 4.4 4.4"><path d="M.3 .3L4.1 4.1M4.1 .3L.3 4.1" stroke="#cfcfcf" stroke-width="1.15"/></svg>
<svg style="left:450.3px;top:12.3px" width="9.4" height="9.4" viewBox="0 0 9.4 9.4"><path d="M4.7 0V9.4M0 4.7H9.4" stroke="#e8e8e8" stroke-width="2"/></svg>
<div class="a" style="left:685px;top:14px;width:10px;height:8px;background:linear-gradient(135deg,#f0f0f0,#c4c4c4);"></div>
<svg style="left:704.5px;top:15px" width="7" height="5" viewBox="0 0 7 5"><path d="M0 0H7L3.5 5Z" fill="#e4e4e4"/></svg>

<!-- ===== right pane: path toolbar ===== -->
<div class="a" style="left:170px;top:60px;width:546px;height:1px;background:#151515;"></div>
<!-- back / forward arrows -->
<svg style="left:174px;top:35px" width="42" height="20" viewBox="174 35 42 20">
  <defs><linearGradient id="arw" x1="0" y1="0" x2="0" y2="1"><stop offset="0" stop-color="#f0f0f0"/><stop offset="1" stop-color="#9c9c9c"/></linearGradient></defs>
  <path d="M176 44.6L183.8 38.2V41.6H190V47.4H183.8V50.6Z" fill="#222" opacity=".7"/>
  <path d="M175.3 43.3L183.1 36.9V40.2H189.4V45.9H183.1V49.2Z" fill="url(#arw)"/>
  <path d="M188.2 47.4L192.1 50.6L188.2 53.8Z" fill="#9a9a9a"/>
  <path d="M214.2 44.4L207 38.4V41.4H201V47.2H207V50.4Z" fill="#2c2c2c" opacity=".7"/>
  <path d="M213.5 43.3L206.4 37.3V40.2H200.4V45.9H206.4V49.2Z" fill="#5e5e5e"/>
</svg>
<!-- path bar -->
<div class="a" style="left:224px;top:32px;width:438px;height:24px;box-sizing:border-box;border:1px solid #080808;border-radius:1px;background:linear-gradient(#3f3f3f,#383838);overflow:hidden;">
  <div class="a" style="left:0;top:0;width:436px;height:1px;background:#484848;"></div>
  <div class="a" style="right:0;top:0;width:18px;height:22px;background:linear-gradient(#393939,#2b2b2b);"></div>
  <div class="a" style="right:0;top:0;width:18px;height:1px;background:#707070;"></div>
</div>
<svg style="left:649.2px;top:41px" width="6.2" height="5.2" viewBox="0 0 6.2 5.2"><path d="M0 0H6.2L3.1 5.2Z" fill="#8c8c8c"/></svg>
<!-- clapper (obj) -->
<svg style="left:229px;top:34px" width="20" height="19" viewBox="229 34 20 19">
  <rect x="230.8" y="41.8" width="16.5" height="10.2" fill="#454c50"/>
  <rect x="230.8" y="41.8" width="16.5" height="2.4" fill="#202224"/>
  <path d="M232.5 41.8h2.2l-1 2.4h-2.2zM236.7 41.8h2.2l-1 2.4h-2.2zM240.9 41.8h2.2l-1 2.4h-2.2zM245.1 41.8h2.2l-1 2.4h-2.2z" fill="#8c9294"/>
  <g transform="rotate(-14 231 41.5)">
    <rect x="231" y="38.8" width="16.5" height="2.4" fill="#202224"/>
    <path d="M232.5 38.8h2.2l-1 2.4h-2.2zM236.7 38.8h2.2l-1 2.4h-2.2zM240.9 38.8h2.2l-1 2.4h-2.2zM245.1 38.8h2.2l-1 2.4h-2.2z" fill="#9aa0a2"/>
  </g>
  <rect x="231" y="36.8" width="3.6" height="3.6" fill="#6e7c86"/>
  <path d="M233.5 48.4Q236.5 46.2 238.6 47.8Q241 46 244.8 48.6" stroke="#9aa2a6" stroke-width="2" fill="none" opacity=".75"/>
  <path d="M230.8 50.6H247.3V52H230.8Z" fill="#363c40"/>
</svg>
<!-- chevron -->
<svg style="left:272px;top:33px" width="12" height="22" viewBox="272 33 12 22">
  <path d="M274 33.4L281.2 44.2L274 55" stroke="#101010" stroke-width="1.1" fill="none"/>
  <path d="M275.2 33.4L282.4 44.2L275.2 55" stroke="#484848" stroke-width=".8" fill="none"/>
</svg>
<!-- file node icon -->
<svg style="left:286px;top:35px" width="20" height="18" viewBox="286 35 20 18">
  <defs>
    <linearGradient id="cyl" x1="0" y1="0" x2="1" y2="0"><stop offset="0" stop-color="#7aa6e0"/><stop offset=".5" stop-color="#3568b4"/><stop offset="1" stop-color="#1d3f7c"/></linearGradient>
    <radialGradient id="red" cx=".35" cy=".3" r=".8"><stop offset="0" stop-color="#f0705c"/><stop offset="1" stop-color="#a81a14"/></radialGradient>
    <linearGradient id="yel" x1="0" y1="0" x2="1" y2="0"><stop offset="0" stop-color="#fff6a0"/><stop offset=".6" stop-color="#e6cc1e"/><stop offset="1" stop-color="#a88c08"/></linearGradient>
  </defs>
  <path d="M287.6 38.2V47.4Q291.6 49.6 295.8 47.4V38.2Z" fill="url(#cyl)"/>
  <ellipse cx="291.7" cy="38.2" rx="4.1" ry="1.6" fill="#9cc0ec"/>
  <circle cx="300.4" cy="43.8" r="4.2" fill="url(#red)"/>
  <path d="M296 41.4L291 49.6Q295.6 52.2 300.4 49.6Z" fill="url(#yel)"/>
</svg>
<!-- pin + ring -->
<svg style="left:670px;top:36px" width="19" height="16" viewBox="0 0 19 16">
  <ellipse cx="10" cy="13.6" rx="7" ry="1" fill="#1c1c1c" opacity=".5"/>
  <path d="M2.3 8.3L8 7.3V9.3Z" fill="#f0f0f0"/>
  <rect x="7.9" y="4.9" width="5.2" height="6" fill="#cfcfcf" stroke="#303030" stroke-width=".6"/>
  <rect x="8.5" y="5.5" width="4.2" height="1.7" fill="#fafafa"/>
  <rect x="13" y="3" width="3.7" height="10.2" rx=".8" fill="#e6e6e6" stroke="#303030" stroke-width=".6"/>
  <rect x="15" y="3.5" width="1.2" height="9.2" fill="#b0b0b0"/>
</svg>

<svg style="left:694px;top:35px" width="18" height="18" viewBox="0 0 18 18">
  <circle cx="9" cy="9" r="7.7" fill="#343c4c" stroke="#5d84c6" stroke-width="1.1"/>
  <circle cx="9" cy="9" r="4.8" fill="none" stroke="#5078bc" stroke-width="1"/>
  <circle cx="9" cy="9" r="2" fill="#3a6cd0"/>
  <circle cx="8.5" cy="8.5" r=".7" fill="#8fb2ee"/>
</svg>

<!-- ===== header row ===== -->
<div class="a" style="left:170px;top:61px;width:546px;height:26px;background:#3a3a3a;"></div>
<div class="a" style="left:172px;top:87px;width:542px;height:1px;background:#0e0e0e;"></div>
<div class="field" style="left:291px;top:64px;width:303px;height:23px;border-color:#252525;border-bottom-width:0;"></div>
<!-- glTF node icon -->
<svg style="left:175px;top:68px;will-change:transform" width="22" height="19" viewBox="175 68 22 19">
  <ellipse cx="183" cy="74.9" rx="6.4" ry="4.4" fill="#33500e" stroke="#74b41c" stroke-width="1.5"/>
  <ellipse cx="180.6" cy="74.9" rx="2.5" ry="2.6" fill="#343a2c" stroke="#86cc26" stroke-width="1.3"/>
  <text x="183.7" y="77.7" font-family="Liberation Sans, sans-serif" font-weight="bold" font-size="7.5" fill="#8ad028" textLength="8.3" lengthAdjust="spacingAndGlyphs">TF</text>
  <path d="M187.9 82H195L191.45 86.1Z" fill="#9a9a9a"/>
</svg>
<!-- gear -->
<svg style="left:597px;top:66px" width="22" height="21" viewBox="597 66 22 21">
  <g fill="none" stroke="#e6e6e0" stroke-width="2.7" stroke-linecap="round" transform="rotate(9 605.7 74.4)">
    <path d="M605.7 68.4V80.4M599.7 74.4H611.7M601.46 70.16L609.94 78.64M609.94 70.16L601.46 78.64"/>
  </g>
  <circle cx="605.7" cy="74.4" r="4.2" fill="#e6e6e0"/>
  <circle cx="605.7" cy="74.4" r="1.9" fill="#3a3a3a"/>
  <path d="M610 82H617.5L613.75 86Z" fill="#9a9a9a"/>
</svg>
<!-- H -->
<svg style="left:620px;top:65px;will-change:transform" width="23" height="22" viewBox="620 65 23 22">
  <text x="622.6" y="81.1" font-family="Liberation Sans, sans-serif" font-weight="bold" font-style="italic" font-size="18.5" fill="#0e1e42" stroke="#dcdcdc" stroke-width="1.3" paint-order="stroke" textLength="13" lengthAdjust="spacingAndGlyphs">H</text>
  <path d="M634 82H641.5L637.75 86Z" fill="#9a9a9a"/>
</svg>
<!-- magnifier -->
<svg style="left:645px;top:66px" width="18" height="18" viewBox="645 66 18 18">
  <path d="M656.2 77L660.6 81.2" stroke="#d8d8d8" stroke-width="1.9" stroke-linecap="round"/>
  <circle cx="652.4" cy="73.1" r="5" fill="#4c5c66" stroke="#e0e0e0" stroke-width="1.4"/>
  <circle cx="651.3" cy="71.8" r="2.2" fill="#7e8e98" opacity=".7"/>
</svg>
<!-- info / help -->
<svg style="left:670px;top:66px;will-change:transform" width="40" height="16" viewBox="670 66 40 16">
  <circle cx="678" cy="74" r="6.6" fill="#222" stroke="#e6e6e6" stroke-width="1.2"/>
  <text x="678" y="78" font-family="Liberation Serif, serif" font-weight="bold" font-style="italic" font-size="11.5" fill="#f2f2f2" text-anchor="middle">i</text>
  <circle cx="701.5" cy="74" r="6.6" fill="#222" stroke="#e6e6e6" stroke-width="1.2"/>
  <text x="701.5" y="77.9" font-family="Liberation Sans, sans-serif" font-weight="bold" font-size="10.5" fill="#f2f2f2" text-anchor="middle">?</text>
</svg>

<!-- ===== parameters ===== -->
<!-- render button + combos -->
<svg id="combos" style="left:0;top:0" width="719" height="475" viewBox="0 0 719 475">
<defs><linearGradient id="cbg" x1="0" y1="0" x2="0" y2="1"><stop offset="0" stop-color="#565656"/><stop offset="1" stop-color="#3e3e3e"/></linearGradient><linearGradient id="csp" x1="0" y1="0" x2="0" y2="1"><stop offset="0" stop-color="#3c3c3c"/><stop offset="1" stop-color="#2a2a2a"/></linearGradient></defs>
<rect x="173.6" y="111.1" width="105" height="2" rx="1.5" fill="#2a2a2a"/><rect x="173.6" y="91.5" width="105" height="20.6" rx="2" fill="#1e1e1e"/><rect x="174.6" y="92.5" width="103" height="18.6" rx="1" fill="url(#cbg)"/><rect x="174.6" y="92.5" width="103" height="1" fill="#5c5c5c" opacity=".7"/>
<rect x="309.3" y="163.5" width="155.4" height="2" rx="1.5" fill="#2a2a2a"/><rect x="309.3" y="143.4" width="155.4" height="21.1" rx="2" fill="#1e1e1e"/><rect x="310.3" y="144.4" width="153.4" height="19.1" rx="1" fill="url(#cbg)"/><rect x="310.3" y="144.4" width="153.4" height="1" fill="#5c5c5c" opacity=".7"/><rect x="441.9" y="144.4" width="21.8" height="19.1" fill="url(#csp)"/><path d="M451 153L454.1 147.2L457.3 153ZM451 154.9H457.3L454.1 160.2Z" fill="#909090"/>
<rect x="309.4" y="288.1" width="73.9" height="2" rx="1.5" fill="#2a2a2a"/><rect x="309.4" y="268.1" width="73.9" height="21" rx="2" fill="#1e1e1e"/><rect x="310.4" y="269.1" width="71.9" height="19" rx="1" fill="url(#cbg)"/><rect x="310.4" y="269.1" width="71.9" height="1" fill="#5c5c5c" opacity=".7"/><rect x="360.8" y="269.1" width="21.5" height="19" fill="url(#csp)"/><path d="M369.9 278.6L373.2 271.9L376.5 278.6ZM369.9 280.3H376.5L373.2 285.3Z" fill="#909090"/>
<rect x="309.4" y="314.4" width="100.9" height="2" rx="1.5" fill="#2a2a2a"/><rect x="309.4" y="294.5" width="100.9" height="20.9" rx="2" fill="#1e1e1e"/><rect x="310.4" y="295.5" width="98.9" height="18.9" rx="1" fill="url(#cbg)"/><rect x="310.4" y="295.5" width="98.9" height="1" fill="#5c5c5c" opacity=".7"/><rect x="388" y="295.5" width="21.3" height="18.9" fill="url(#csp)"/><path d="M396.8 304.6L400.1 298.1L403.5 304.6ZM396.8 306.2H403.5L400.1 311.2Z" fill="#909090"/>
<rect x="669.5" y="118.4" width="18.1" height="19.6" rx="1" fill="#262626"/><rect x="670.5" y="119.4" width="16.1" height="17.3" fill="url(#csp)"/>
</svg>
<!-- output file -->
<div class="field" style="left:309px;top:118px;width:359px;height:23px;"></div>
<svg style="left:676px;top:124.8px" width="6.6" height="5.5" viewBox="0 0 6.6 5.5"><path d="M0 0H6.6L3.3 5.5Z" fill="#848484"/></svg>
<svg style="left:696px;top:121px" width="16" height="18" viewBox="696 121 16 18">
  <path d="M697.4 122.3H704L706.7 125V134.4H697.4Z" fill="#a6a6a6"/>
  <path d="M697.4 122.3H699V134.4H697.4Z" fill="#c4c4c4"/>
  <path d="M704 122.3V125H706.7Z" fill="#e8e8e8"/>
  <path d="M702.1 125.3V137.2L705 134.5L706.2 137L707.4 136.4L706.3 134.1H710.2Z" fill="#0a0a0a" stroke="#f0f0f0" stroke-width=".8" stroke-linejoin="round"/>
</svg>
<!-- export type -->
<!-- use sop path -->
<!-- sop path / root / objects -->
<div class="fieldd" style="left:309.1px;top:191px;width:357px;height:22.8px;"></div>
<div class="fieldd" style="left:309.1px;top:216.9px;width:357px;height:22.8px;"></div>
<div class="fieldd" style="left:309.1px;top:242.2px;width:358.7px;height:22.4px;"></div>
<div class="a" style="left:669.5px;top:242.4px;width:18px;height:20px;box-sizing:border-box;border:1px solid #323232;border-radius:2px;background:#373737;"></div>
<svg style="left:676px;top:249.3px" width="6.6" height="5" viewBox="0 0 6.6 5"><path d="M0 0H6.6L3.3 5Z" fill="#5c5c5c"/></svg>
<!-- jump arrows -->
<svg style="left:670px;top:196px" width="18" height="14" viewBox="670 196 18 14">
  <defs><linearGradient id="ja" x1="0" y1="0" x2="0" y2="1"><stop offset="0" stop-color="#fafafa"/><stop offset="1" stop-color="#c8c8c8"/></linearGradient></defs>
  <path d="M671.2 207C672 202.4 675.6 200.4 680 204.8" stroke="#222" stroke-width="1.6" fill="none" opacity=".55"/>
  <path id="jarw" d="M670.8 206C671.5 201 675 198.6 679 198.8C680.6 198.9 682 199.5 683 200.5L685.5 198.2V207.2H677.3L679.8 204.7C677.8 202.6 674.5 202.8 670.8 206Z" fill="url(#ja)"/>
</svg>
<svg style="left:670px;top:222px" width="18" height="14" viewBox="670 222 18 14">
  <path d="M671.8 231.8C672.5 227 675.6 224.8 679.4 225C681 225.1 682.2 225.6 683.2 226.6L685.5 224.4V233.2H677.6L680 230.7C678 228.7 675 228.8 671.8 231.8Z" fill="#6e6e6e"/>
</svg>
<!-- node chooser icons -->
<svg style="left:694px;top:193px" width="18" height="72" viewBox="694 193 18 72">
  <g id="chz" fill="#707070">
    <rect x="699.7" y="194.7" width="4.3" height="1.9"/>
    <rect x="694.8" y="197.7" width="14.7" height="4.1"/>
    <rect x="701.4" y="201.5" width="1.3" height="4.5"/>
    <rect x="699.6" y="203.7" width="2.4" height="1.1"/>
    <path d="M702.3 200.7L709.6 206.5L706.3 206.9L707.9 210.1L706.5 210.8L704.9 207.6L702.3 209.8Z" fill="#747474" stroke="#383838" stroke-width=".7"/>
  </g>
  <use href="#chz" y="26"/>
  <use href="#chz" y="52"/>
</svg>
<!-- texture format / max res -->
<!-- checkboxes -->
<svg style="left:0;top:0" width="719" height="475" viewBox="0 0 719 475">
  <rect x="309.1" y="171.9" width="13.8" height="13.8" fill="#343434"/>
  <rect x="421.1" y="299.9" width="13.8" height="13.8" fill="#2c2c2c"/><rect x="422.9" y="301.7" width="10.3" height="10.3" fill="#141414"/>
  <rect x="309.1" y="322.8" width="13.8" height="13.8" fill="#2c2c2c"/><rect x="310.9" y="324.6" width="10.3" height="10.3" fill="#141414"/>
  <rect x="309.1" y="344.1" width="13.8" height="13.8" fill="#2c2c2c"/><rect x="310.9" y="345.9" width="10.3" height="10.3" fill="#141414"/>
  <rect x="309.1" y="365.1" width="13.8" height="13.8" fill="#343434"/>
  <rect x="309.1" y="386.1" width="13.8" height="13.8" fill="#2c2c2c"/><rect x="310.9" y="387.9" width="10.3" height="10.3" fill="#141414"/>
  <rect x="309.1" y="407.1" width="13.8" height="13.8" fill="#2c2c2c"/><rect x="310.9" y="408.9" width="10.3" height="10.3" fill="#141414"/>
  <rect x="309.1" y="428.1" width="13.8" height="13.8" fill="#2c2c2c"/><rect x="310.9" y="429.9" width="10.3" height="10.3" fill="#141414"/>
  <defs><path id="ck" d="M2.6 6.7Q3.5 4.8 5.2 5Q6.3 5.6 7 8Q9.6 3.6 13.1 1.3L13.6 2.7Q10.1 6.5 7.2 12.1L5.7 12.1Q4.4 9.1 2.6 6.7Z"/></defs>
  <use href="#ck" x="421.3" y="300" fill="#fafafa"/>
  <use href="#ck" x="309.3" y="365.1" fill="#787878"/>
  <use href="#ck" x="309.3" y="386.1" fill="#fafafa"/>
  <use href="#ck" x="309.3" y="407.1" fill="#fafafa"/>
  <use href="#ck" x="309.3" y="428.1" fill="#fafafa"/>
</svg>

<span class="t" style="left:176px;top:9px;color:#cccccc;font-family:'Liberation Sans',sans-serif;font-size:24px;font-style:italic;transform:translate(0.31px,0.02px) scale(0.4303,0.4706);">rop_gltf1</span>
<span class="t" style="left:251px;top:9px;color:#cccccc;font-family:'Liberation Sans',sans-serif;font-size:24px;transform:translate(0.41px,0px) scale(0.4107,0.4706);">Take List</span>
<span class="t" style="left:324px;top:9px;color:#cccccc;font-family:'Liberation Sans',sans-serif;font-size:24px;transform:translate(0.65px,0px) scale(0.4257,0.4706);">Performance Monitor</span>
<span class="t" style="left:251px;top:35px;color:#d4d4d4;font-family:'Liberation Sans',sans-serif;font-size:24px;transform:translate(0.96px,0px) scale(0.5215,0.4706);">obj</span>
<span class="t" style="left:307px;top:35px;color:#d4d4d4;font-family:'Liberation Sans',sans-serif;font-size:24px;transform:translate(0.99px,0px) scale(0.4894,0.4706);">file1</span>
<span class="t" style="left:16px;top:97px;color:#e2e2e2;font-family:'Liberation Sans',sans-serif;font-size:24px;transform:translate(0.61px,0.4px) scale(0.4447,0.4706);">Persp</span>
<span class="t" style="left:75px;top:97px;color:#e2e2e2;font-family:'Liberation Sans',sans-serif;font-size:24px;transform:translate(0.57px,0.4px) scale(0.4609,0.4706);">No cam</span>
<span class="t" style="left:196px;top:66px;color:#dedede;font-family:'Liberation Sans',sans-serif;font-size:24px;font-weight:bold;transform:translate(0.6px,0px) scale(0.4491,0.4706);">ROP GLTF Output</span>
<span class="t" style="left:293px;top:67px;color:#e8e8e8;font-family:'DejaVu Sans Mono','Liberation Mono',monospace;font-size:22.4px;transform:translate(0.86px,0.01px) scale(0.5357,0.48);">rop_gltf1</span>
<span class="t" style="left:189px;top:92px;color:#d2d2d2;font-family:'Liberation Sans',sans-serif;font-size:24px;transform:translate(0.59px,0px) scale(0.4553,0.4706);">Render to Disk</span>
<span class="t" style="left:238px;top:120px;color:#c8c8c8;font-family:'Liberation Sans',sans-serif;font-size:24px;transform:translate(0.73px,0px) scale(0.4748,0.4706);">Output File</span>
<span class="t" style="left:312px;top:121px;color:#f4f4f4;font-family:'DejaVu Sans Mono','Liberation Mono',monospace;font-size:22px;font-weight:bold;transform:translate(0.32px,0px) scale(0.5384,0.5);">D:/Tutorials/Houdini/HoudiniTutorial.glb</span>
<span class="t" style="left:234px;top:146px;color:#c8c8c8;font-family:'Liberation Sans',sans-serif;font-size:24px;transform:translate(0.76px,0px) scale(0.4688,0.4706);">Export Type</span>
<span class="t" style="left:324px;top:146px;color:#d8d8d8;font-family:'Liberation Sans',sans-serif;font-size:24px;font-weight:bold;transform:translate(0.03px,0px) scale(0.4578,0.4706);">glb</span>
<span class="t" style="left:329px;top:169px;color:#6c6c6c;font-family:'Liberation Sans',sans-serif;font-size:24px;transform:translate(0.63px,0px) scale(0.4342,0.4706);">Use SOP Path</span>
<span class="t" style="left:247px;top:193px;color:#7c7c7c;font-family:'Liberation Sans',sans-serif;font-size:24px;transform:translate(0.49px,0px) scale(0.4418,0.4706);">SOP Path</span>
<span class="t" style="left:235px;top:219px;color:#7c7c7c;font-family:'Liberation Sans',sans-serif;font-size:24px;transform:translate(0.68px,0px) scale(0.4614,0.4706);">Root Object</span>
<span class="t" style="left:312px;top:220px;color:#5c5c5c;font-family:'DejaVu Sans Mono','Liberation Mono',monospace;font-size:22.4px;transform:translate(0.71px,0.01px) scale(0.5557,0.48);">/obj</span>
<span class="t" style="left:256px;top:244px;color:#7c7c7c;font-family:'Liberation Sans',sans-serif;font-size:24px;transform:translate(0.54px,0px) scale(0.4661,0.4706);">Objects</span>
<span class="t" style="left:313px;top:245px;color:#5c5c5c;font-family:'DejaVu Sans Mono','Liberation Mono',monospace;font-size:22.4px;transform:translate(0.27px,0.01px) scale(0.5073,0.48);">*</span>
<span class="t" style="left:218px;top:271px;color:#c8c8c8;font-family:'Liberation Sans',sans-serif;font-size:24px;transform:translate(0.35px,0px) scale(0.4681,0.4706);">Texture Format</span>
<span class="t" style="left:323px;top:270px;color:#d8d8d8;font-family:'Liberation Sans',sans-serif;font-size:24px;transform:translate(0.62px,0px) scale(0.4379,0.4706);">PNG</span>
<span class="t" style="left:178px;top:297px;color:#c8c8c8;font-family:'Liberation Sans',sans-serif;font-size:24px;transform:translate(0.77px,0px) scale(0.4623,0.4706);">Max Texture Resolution</span>
<span class="t" style="left:323px;top:296px;color:#d8d8d8;font-family:'Liberation Sans',sans-serif;font-size:24px;transform:translate(0.54px,0px) scale(0.4775,0.4706);">No Limit</span>
<span class="t" style="left:441px;top:297px;color:#c8c8c8;font-family:'Liberation Sans',sans-serif;font-size:24px;transform:translate(0.59px,0px) scale(0.4546,0.4706);">Rescale Texture as Power of Two</span>
<span class="t" style="left:329px;top:320px;color:#c8c8c8;font-family:'Liberation Sans',sans-serif;font-size:24px;transform:translate(0.8px,0px) scale(0.4509,0.4706);">Flip Normal Map Y</span>
<span class="t" style="left:329px;top:341px;color:#c8c8c8;font-family:'Liberation Sans',sans-serif;font-size:24px;transform:translate(0.56px,0px) scale(0.4567,0.4706);">Save Non-Displayed (Hidden) Objects</span>
<span class="t" style="left:329px;top:362px;color:#6e6e6e;font-family:'Liberation Sans',sans-serif;font-size:24px;transform:translate(0.92px,0px) scale(0.456,0.4706);">Cull Empty Nodes</span>
<span class="t" style="left:329px;top:383px;color:#c8c8c8;font-family:'Liberation Sans',sans-serif;font-size:24px;transform:translate(0.55px,0px) scale(0.4736,0.4706);">Export Custom Attributes</span>
<span class="t" style="left:329px;top:404px;color:#c8c8c8;font-family:'Liberation Sans',sans-serif;font-size:24px;transform:translate(0.58px,0px) scale(0.4599,0.4706);">Export Names</span>
<span class="t" style="left:329px;top:425px;color:#c8c8c8;font-family:'Liberation Sans',sans-serif;font-size:24px;transform:translate(0.56px,0px) scale(0.4681,0.4706);">Export Materials</span>
</body></html>
